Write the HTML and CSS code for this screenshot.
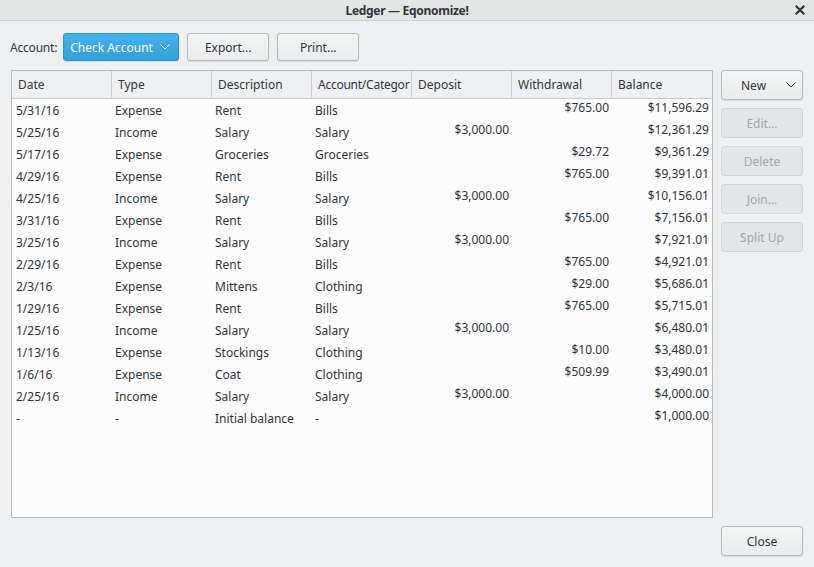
FILE: index.html
```html
<!DOCTYPE html>
<html>
<head>
<meta charset="utf-8">
<link rel="stylesheet" href="styles.css">
</head>
<body>
<div class="window">
  <div class="titlebar">
    <span class="title">Ledger — Eqonomize!</span>
    <svg class="close-x" width="10" height="10" viewBox="0 0 10 10"><path d="M1.5 1.5 L8.5 8.5 M8.5 1.5 L1.5 8.5" stroke="#31363b" stroke-width="2.2" stroke-linecap="square"/></svg>
  </div>
  <div class="content">
    <div class="toolbar">
      <span class="label">Account:</span>
      <div class="combo">
        <span>Check Account</span>
        <svg width="10" height="6" viewBox="0 0 10 6"><path d="M0.5 0.5 L5 5 L9.5 0.5" fill="none" stroke="#fff" stroke-width="1"/></svg>
      </div>
      <button class="btn">Export...</button>
      <button class="btn">Print...</button>
    </div>
    <div class="main">
      <div class="table">
        <div class="thead">
          <div class="th">Date</div>
          <div class="th">Type</div>
          <div class="th">Description</div>
          <div class="th tight">Account/Categor</div>
          <div class="th">Deposit</div>
          <div class="th">Withdrawal</div>
          <div class="th last">Balance</div>
        </div>
        <div class="tbody">
          <div class="tr"><div class="td">5/31/16</div><div class="td">Expense</div><div class="td">Rent</div><div class="td">Bills</div><div class="td num"></div><div class="td num">$765.00</div><div class="td num">$11,596.29</div></div>
          <div class="tr"><div class="td">5/25/16</div><div class="td">Income</div><div class="td">Salary</div><div class="td">Salary</div><div class="td num">$3,000.00</div><div class="td num"></div><div class="td num">$12,361.29</div></div>
          <div class="tr"><div class="td">5/17/16</div><div class="td">Expense</div><div class="td">Groceries</div><div class="td">Groceries</div><div class="td num"></div><div class="td num">$29.72</div><div class="td num">$9,361.29</div></div>
          <div class="tr"><div class="td">4/29/16</div><div class="td">Expense</div><div class="td">Rent</div><div class="td">Bills</div><div class="td num"></div><div class="td num">$765.00</div><div class="td num">$9,391.01</div></div>
          <div class="tr"><div class="td">4/25/16</div><div class="td">Income</div><div class="td">Salary</div><div class="td">Salary</div><div class="td num">$3,000.00</div><div class="td num"></div><div class="td num">$10,156.01</div></div>
          <div class="tr"><div class="td">3/31/16</div><div class="td">Expense</div><div class="td">Rent</div><div class="td">Bills</div><div class="td num"></div><div class="td num">$765.00</div><div class="td num">$7,156.01</div></div>
          <div class="tr"><div class="td">3/25/16</div><div class="td">Income</div><div class="td">Salary</div><div class="td">Salary</div><div class="td num">$3,000.00</div><div class="td num"></div><div class="td num">$7,921.01</div></div>
          <div class="tr"><div class="td">2/29/16</div><div class="td">Expense</div><div class="td">Rent</div><div class="td">Bills</div><div class="td num"></div><div class="td num">$765.00</div><div class="td num">$4,921.01</div></div>
          <div class="tr"><div class="td">2/3/16</div><div class="td">Expense</div><div class="td">Mittens</div><div class="td">Clothing</div><div class="td num"></div><div class="td num">$29.00</div><div class="td num">$5,686.01</div></div>
          <div class="tr"><div class="td">1/29/16</div><div class="td">Expense</div><div class="td">Rent</div><div class="td">Bills</div><div class="td num"></div><div class="td num">$765.00</div><div class="td num">$5,715.01</div></div>
          <div class="tr"><div class="td">1/25/16</div><div class="td">Income</div><div class="td">Salary</div><div class="td">Salary</div><div class="td num">$3,000.00</div><div class="td num"></div><div class="td num">$6,480.01</div></div>
          <div class="tr"><div class="td">1/13/16</div><div class="td">Expense</div><div class="td">Stockings</div><div class="td">Clothing</div><div class="td num"></div><div class="td num">$10.00</div><div class="td num">$3,480.01</div></div>
          <div class="tr"><div class="td">1/6/16</div><div class="td">Expense</div><div class="td">Coat</div><div class="td">Clothing</div><div class="td num"></div><div class="td num">$509.99</div><div class="td num">$3,490.01</div></div>
          <div class="tr"><div class="td">2/25/16</div><div class="td">Income</div><div class="td">Salary</div><div class="td">Salary</div><div class="td num">$3,000.00</div><div class="td num"></div><div class="td num">$4,000.00</div></div>
          <div class="tr"><div class="td">-</div><div class="td">-</div><div class="td">Initial balance</div><div class="td">-</div><div class="td num"></div><div class="td num"></div><div class="td num">$1,000.00</div></div>
        </div>
      </div>
      <div class="side">
        <button class="btn side-btn new-btn"><span>New</span><svg width="10" height="6" viewBox="0 0 10 6"><path d="M0.5 0.5 L5 5 L9.5 0.5" fill="none" stroke="#31363b" stroke-width="1"/></svg></button>
        <button class="btn side-btn" disabled>Edit...</button>
        <button class="btn side-btn" disabled>Delete</button>
        <button class="btn side-btn" disabled>Join...</button>
        <button class="btn side-btn" disabled>Split Up</button>
      </div>
    </div>
    <div class="footer">
      <button class="btn close-btn">Close</button>
    </div>
  </div>
</div>
</body>
</html>
```

FILE: styles.css
```css
* { box-sizing: border-box; }
html, body {
  margin: 0;
  padding: 0;
  width: 814px;
  height: 567px;
  overflow: hidden;
  background: #eff0f1;
  font-family: "Noto Sans", "DejaVu Sans", sans-serif;
  font-size: 12px;
  color: #31363b;
}
.window {
  display: flex;
  flex-direction: column;
  height: 567px;
}
.titlebar {
  height: 21px;
  background: #e4e5e5;
  border-bottom: 1px solid #cfd0d1;
  display: flex;
  align-items: center;
  justify-content: center;
  position: relative;
}
.title {
  font-weight: bold;
  font-size: 12px;
  letter-spacing: -0.3px;
  color: #31363b;
}
.close-x {
  position: absolute;
  right: 9px;
  top: 5px;
}
.content {
  flex: 1;
  display: flex;
  flex-direction: column;
  padding: 12px 11px 11px 11px;
  min-height: 0;
}
.toolbar {
  display: flex;
  align-items: center;
  height: 28px;
  margin-left: -1px;
}
.label {
  margin-right: 6px;
  letter-spacing: -0.2px;
}
.combo {
  width: 116px;
  height: 28px;
  background: linear-gradient(#42b1eb, #349fdc);
  border: 1px solid #2e93cf;
  border-radius: 3px;
  color: #fcfcfc;
  display: flex;
  align-items: center;
  justify-content: space-between;
  padding: 0 8px 0 6px;
  margin-right: 8px;
  box-shadow: 0 1px 1px rgba(0,0,0,0.12);
}
.btn {
  font-family: inherit;
  font-size: 12px;
  color: #31363b;
  width: 82px;
  height: 28px;
  background: linear-gradient(#f4f5f5, #eaebec);
  border: 1px solid #b8babc;
  border-radius: 3px;
  box-shadow: 0 1px 1px rgba(0,0,0,0.10);
  padding: 0;
  margin-right: 8px;
}
.main {
  display: flex;
  gap: 8px;
  margin-top: 9px;
  height: 448px;
}
.table {
  width: 702px;
  border: 1px solid #b9bbbd;
  background: #fcfcfc;
  display: flex;
  flex-direction: column;
}
.thead {
  display: grid;
  grid-template-columns: repeat(7, 100px);
  height: 28px;
  background: #eff0f1;
  border-bottom: 1px solid #c9cacb;
}
.th {
  padding-left: 6px;
  display: flex;
  align-items: center;
  border-right: 1px solid #cfd0d1;
  white-space: nowrap;
  overflow: hidden;
}
.th.tight { letter-spacing: -0.25px; }
.th.last { border-right: none; }
.tbody {
  flex: 1;
}
.tr {
  display: grid;
  grid-template-columns: repeat(7, 100px);
  height: 22px;
}
.td {
  padding-left: 3px;
  display: flex;
  align-items: center;
  white-space: nowrap;
  overflow: hidden;
}
.td:first-child { padding-left: 4px; }
.td.num {
  justify-content: flex-end;
  align-items: flex-start;
  padding-right: 3px;
  padding-top: 0px;
}
.side {
  width: 82px;
  display: flex;
  flex-direction: column;
  gap: 8px;
}
.side-btn {
  height: 30px;
  margin: 0;
  flex: none;
}
.new-btn {
  display: flex;
  align-items: center;
  justify-content: space-between;
  padding: 0 6px 0 19px;
}
.btn:disabled {
  background: #e3e5e7;
  border-color: #d3d5d7;
  color: #a6a8ab;
  box-shadow: none;
}
.footer {
  display: flex;
  justify-content: flex-end;
  margin-top: 8px;
}
.close-btn {
  height: 30px;
  margin: 0;
}
```
